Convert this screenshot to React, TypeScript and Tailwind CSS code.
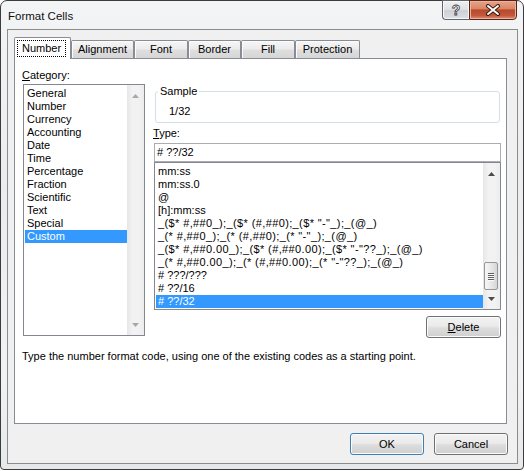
import React from 'react';

const ui = "font-['Liberation_Sans',Arial,sans-serif] text-[11px] leading-[13px] text-black";

const categories = ['General', 'Number', 'Currency', 'Accounting', 'Date', 'Time', 'Percentage', 'Fraction', 'Scientific', 'Text', 'Special', 'Custom'];

const types = [
  'mm:ss',
  'mm:ss.0',
  '@',
  '[h]:mm:ss',
  '_($* #,##0_);_($* (#,##0);_($* "-"_);_(@_)',
  '_(* #,##0_);_(* (#,##0);_(* "-"_);_(@_)',
  '_($* #,##0.00_);_($* (#,##0.00);_($* "-"??_);_(@_)',
  '_(* #,##0.00_);_(* (#,##0.00);_(* "-"??_);_(@_)',
  '# ???/???',
  '# ??/16',
  '# ??/32',
];

const tabs = [
  { label: 'Alignment', w: 'w-[63px]' },
  { label: 'Font', w: 'w-[54px]' },
  { label: 'Border', w: 'w-[53px]' },
  { label: 'Fill', w: 'w-[54px]' },
  { label: 'Protection', w: 'w-[65px]' },
];

function Arrow({ up, disabled }: { up?: boolean; disabled?: boolean }) {
  return (
    <svg width="7" height="4" viewBox="0 0 7 4">
      <polygon points={up ? '3.5,0 7,4 0,4' : '0,0 7,0 3.5,4'} fill={disabled ? '#a8a8a8' : '#4b4b4b'} />
    </svg>
  );
}

function ScrollBar({ disabled, thumb }: { disabled?: boolean; thumb?: boolean }) {
  return (
    <div className="w-[17px] h-full flex flex-col bg-[linear-gradient(to_right,#e6e6e6,#f2f2f2_30%,#f2f2f2_70%,#ececec)]">
      <div className="h-[17px] flex items-center justify-center pt-[4px]">
        <Arrow up disabled={disabled} />
      </div>
      <div className="flex-1 flex flex-col justify-end pb-[2px]">
        {thumb && (
          <div className="ml-px w-[14px] h-[28px] rounded-[2px] border border-[#979797] bg-[linear-gradient(to_right,#f6f6f6,#e8e8e8_50%,#d6d6d6)] flex flex-col items-center justify-center gap-px">
            {[0, 1, 2, 3].map(i => (
              <div key={i} className="w-[6px] h-px bg-[#5e5e5e] shadow-[0_1px_0_#fafafa]" />
            ))}
          </div>
        )}
      </div>
      <div className="h-[17px] flex items-center justify-center pb-[4px]">
        <Arrow disabled={disabled} />
      </div>
    </div>
  );
}

function Button({ children, primary }: { children: React.ReactNode; primary?: boolean }) {
  return (
    <div
      className={`w-[74px] h-[22px] flex items-center justify-center rounded-[3px] border bg-[linear-gradient(to_bottom,#f2f2f2,#ebebeb_45%,#dddddd_55%,#cfcfcf)] shadow-[inset_0_0_0_1px_#fbfbfb] ${primary ? 'border-[#3c7fb1]' : 'border-[#707070]'}`}
    >
      {children}
    </div>
  );
}

export default function App() {
  return (
    <div className={`w-[524px] h-[471px] bg-white ${ui}`}>
      <div className="w-[524px] h-[470px] flex flex-col rounded-t-[7px] rounded-b-[4px] border border-[#3c3c3c] bg-[linear-gradient(to_bottom,#f3f4f5,#eaecee_40%,#f1f2f3_80%,#e6e8ea)] pl-[6px] pr-[5px] pb-[5px]">
        {/* title bar */}
        <div className="h-[28px] flex items-start">
          <span className="mt-[8px] pl-px text-[11.5px] leading-[14px] text-[#111] [text-shadow:0_0_6px_#fff]">Format Cells</span>
          <div className="ml-auto mr-px -mt-px flex">
            <div className="w-[27px] h-[20px] flex items-center justify-center border border-r-0 border-[#606468] rounded-bl-[4px] bg-[linear-gradient(to_bottom,#eef0f2,#dfe2e5_48%,#cdd1d6_52%,#dcdfe3)] shadow-[inset_0_0_0_1px_#f8f8f8]">
              <span className="text-[14px] leading-[14px] font-bold text-white [-webkit-text-stroke:0.8px_#3c3c3c]">?</span>
            </div>
            <div className="w-[48px] h-[20px] flex items-center justify-center border border-[#5a2418] rounded-br-[4px] bg-[linear-gradient(to_bottom,#e6a48a,#d98766_42%,#b9492a_50%,#c2573a_80%,#dc9275)] shadow-[inset_0_0_0_1px_#eab29e]">
              <svg width="16" height="12" viewBox="0 0 16 12">
                <path d="M3 2 L13 10 M13 2 L3 10" stroke="#3a1a10" strokeWidth="4" strokeLinecap="round" />
                <path d="M3 2 L13 10 M13 2 L3 10" stroke="#ffffff" strokeWidth="2" strokeLinecap="round" />
              </svg>
            </div>
          </div>
        </div>

        {/* client area */}
        <div className="flex-1 flex flex-col border border-[#8c8c8c] bg-[#f0f0f0]">
          {/* tabs */}
          <div className="flex items-end pt-[7px] ml-[6px]">
            <div className="relative z-10 -mb-px w-[57px] h-[22px] border border-b-0 border-[#898c95] rounded-t-[2px] bg-white pl-[2px] pt-[2px]">
              <div className="w-[49px] h-[17px] border border-dotted border-black flex items-center justify-center">Number</div>
            </div>
            {tabs.map(t => (
              <div
                key={t.label}
                className={`${t.w} h-[18px] border border-b-0 border-[#898c95] rounded-t-[2px] flex items-center justify-center bg-[linear-gradient(to_bottom,#f6f6f6,#ececec_45%,#dedede_55%,#d6d6d6)] shadow-[inset_1px_1px_0_#fcfcfc]`}
              >
                {t.label}
              </div>
            ))}
          </div>

          {/* panel */}
          <div className="ml-[6px] w-[493px] h-[366px] border border-[#898c95] bg-white pt-[10px] pl-[8px] pr-[5px] flex flex-col">
            <div className="flex gap-[9px]">
              {/* category */}
              <div className="w-[122px] flex flex-col">
                <div className="-ml-px"><span className="underline">C</span>ategory:</div>
                <div className="mt-[2px] h-[252px] border border-[#828790] flex">
                  <div className="flex-1 pt-[2px]">
                    {categories.map(c => (
                      <div
                        key={c}
                        className={`ml-px h-[13px] pl-[2px] ${c === 'Custom' ? 'bg-[#3399ff] text-white' : ''}`}
                      >
                        {c}
                      </div>
                    ))}
                  </div>
                  <ScrollBar disabled />
                </div>
              </div>

              {/* type */}
              <div className="w-[347px] flex flex-col pt-[16px]">
                <fieldset className="mx-px h-[38px] border border-[#d5dfe5] rounded-[3px]">
                  <legend className="ml-[2px] px-[2px] leading-[13px]">Sample</legend>
                  <div className="pt-[7px] pl-[13px]">1/32</div>
                </fieldset>
                <div className="mt-[4px] -ml-px"><span className="underline">T</span>ype:</div>
                <div className="mt-[3px] h-[19px] border border-[#abadb3] pl-[2px] pt-[2px]"># ??/32</div>
                <div className="h-[148px] border border-[#828790] flex">
                  <div className="flex-1 pt-[2px] whitespace-pre">
                    {types.map(t => (
                      <div
                        key={t}
                        className={`ml-px h-[13px] pl-[2px] ${t.length > 20 ? 'tracking-[0.38px]' : ''} ${t === '# ??/32' ? 'bg-[#3399ff] text-white' : ''}`}
                      >
                        {t}
                      </div>
                    ))}
                  </div>
                  <ScrollBar thumb />
                </div>
                <div className="mt-[6px] self-end">
                  <div className="w-[75px] h-[22px] flex items-center justify-center rounded-[3px] border border-[#707070] bg-[linear-gradient(to_bottom,#f2f2f2,#ebebeb_45%,#dddddd_55%,#cfcfcf)] shadow-[inset_0_0_0_1px_#fbfbfb]">
                    <span><span className="underline">D</span>elete</span>
                  </div>
                </div>
              </div>
            </div>
            <p className="mt-[12px] -ml-px">Type the number format code, using one of the existing codes as a starting point.</p>
          </div>

          {/* dialog buttons */}
          <div className="mt-[9px] flex justify-end gap-[10px] pr-[9px]">
            <Button primary>OK</Button>
            <Button>Cancel</Button>
          </div>
        </div>
      </div>
    </div>
  );
}
